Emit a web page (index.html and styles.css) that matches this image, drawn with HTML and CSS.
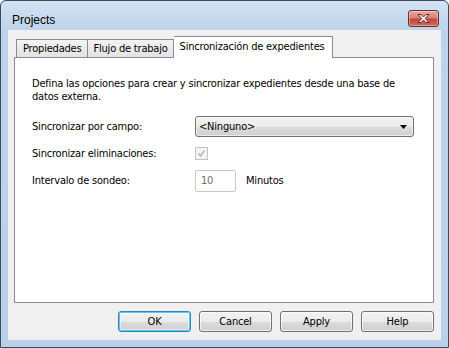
FILE: index.html
```html
<!DOCTYPE html>
<html lang="es">
<head>
<meta charset="utf-8">
<title>Projects</title>
<link rel="stylesheet" href="styles.css">
</head>
<body>
<div class="window">
  <div class="titlebar">
    <span class="title">Projects</span>
    <button class="close" aria-label="Cerrar">
      <svg width="15" height="11" viewBox="0 0 15 11">
        <path d="M2 1.5 L5 1.5 L7.5 4 L10 1.5 L13 1.5 L9.2 5.5 L13 9.5 L10 9.5 L7.5 7 L5 9.5 L2 9.5 L5.8 5.5 Z" fill="#fff" stroke="#5a2a26" stroke-width="1" stroke-linejoin="round"/>
      </svg>
    </button>
  </div>
  <div class="client">
    <div class="tabs">
      <div class="tab first">Propiedades</div>
      <div class="tab">Flujo de trabajo</div>
      <div class="tab selected">Sincronización de expedientes</div>
    </div>
    <div class="panel">
      <p class="intro">Defina las opciones para crear y sincronizar expedientes desde una base de datos externa.</p>
      <div class="form">
        <div class="label">Sincronizar por campo:</div>
        <div class="combo">
          <span>&lt;Ninguno&gt;</span>
          <svg class="arrow" width="7" height="4" viewBox="0 0 7 4"><path d="M0 0 H7 L3.5 4 Z" fill="#000"/></svg>
        </div>
        <div class="label">Sincronizar eliminaciones:</div>
        <div class="check-cell">
          <span class="check">
            <svg width="11" height="11" viewBox="0 0 11 11"><path d="M2.5 5.5 L4.5 8 L8.5 2.5" fill="none" stroke="#b5b5b5" stroke-width="1.4"/></svg>
          </span>
        </div>
        <div class="label">Intervalo de sondeo:</div>
        <div class="interval">
          <span class="input">10</span>
          <span class="unit">Minutos</span>
        </div>
      </div>
    </div>
    <div class="buttons">
      <button class="btn default">OK</button>
      <button class="btn">Cancel</button>
      <button class="btn">Apply</button>
      <button class="btn">Help</button>
    </div>
  </div>
</div>
</body>
</html>
```
FILE: styles.css
```css
html, body {
  margin: 0;
  padding: 0;
  background: #ffffff;
}

.window {
  box-sizing: border-box;
  width: 449px;
  height: 348px;
  border: 1px solid #3c4a5a;
  border-radius: 6px 6px 0 0;
  background: linear-gradient(to bottom, #d3e3f4 0px, #bcd3eb 30px, #b9d1ea 100%);
  padding: 0 7px 7px 7px;
  display: flex;
  flex-direction: column;
  font-family: "DejaVu Sans Condensed", "DejaVu Sans", sans-serif;
  font-stretch: condensed;
  font-size: 11px;
  letter-spacing: -0.2px;
  color: #000;
}

.titlebar {
  height: 29px;
  display: flex;
  align-items: flex-start;
  justify-content: space-between;
}

.title {
  font-family: "Liberation Sans", Arial, sans-serif;
  font-stretch: normal;
  letter-spacing: 0;
  font-size: 12px;
  margin-top: 12px;
  margin-left: 4px;
  color: #000;
}

.close {
  margin-top: 9px;
  margin-right: 2px;
  width: 31px;
  height: 17px;
  padding: 0;
  border: 1px solid #6b2e2a;
  border-radius: 3px;
  background: linear-gradient(to bottom, #e8a99f 0%, #d98277 45%, #c4483b 55%, #cf6a58 100%);
  display: flex;
  align-items: center;
  justify-content: center;
  box-shadow: inset 0 0 0 1px rgba(255, 255, 255, 0.35);
}

.client {
  flex: 1;
  background: #f0f0f0;
  display: flex;
  flex-direction: column;
  padding: 6px 7px 8px 6px;
}

.tabs {
  display: flex;
  align-items: flex-end;
  height: 22px;
  margin-bottom: -1px;
  padding-left: 2px;
}

.tab {
  box-sizing: border-box;
  height: 18px;
  margin-bottom: 1px;
  padding: 2px 5px 0 5px;
  border: 1px solid #898c95;
  border-bottom: none;
  border-right: none;
  background: linear-gradient(to bottom, #f3f3f3, #e3e3e3);
  white-space: nowrap;
}

.tab.first {
  padding: 2px 6px 0 6px;
}

.tab:nth-child(2) {
  border-right: 1px solid #898c95;
}

.tab.selected {
  position: relative;
  z-index: 1;
  height: 22px;
  margin-bottom: 0;
  padding: 3px 7px 0 6px;
  background: #ffffff;
  border-right: 1px solid #898c95;
  border-left: none;
}

.panel {
  flex: 1;
  background: #ffffff;
  border: 1px solid #898c95;
  padding: 19px 16px 0 17px;
}

.intro {
  margin: 0;
  line-height: 13px;
}

.form {
  margin-top: 13px;
  display: grid;
  grid-template-columns: 163px 1fr;
  grid-template-rows: 21px 20px 22px;
  row-gap: 6px;
  align-items: center;
}

.form > :nth-child(n+5) {
  margin-top: 1px;
}

.combo {
  box-sizing: border-box;
  width: 219px;
  height: 21px;
  border: 1px solid #707070;
  border-radius: 3px;
  background: linear-gradient(to bottom, #f2f2f2 0%, #ebebeb 50%, #dddddd 51%, #cfcfcf 100%);
  display: flex;
  align-items: center;
  justify-content: space-between;
  padding: 0 6px 0 3px;
  box-shadow: inset 0 0 0 1px rgba(255, 255, 255, 0.6);
}

.check-cell {
  display: flex;
  align-items: center;
}

.check {
  box-sizing: border-box;
  width: 13px;
  height: 13px;
  border: 1px solid #c2c2c2;
  background: #f4f4f4;
  display: flex;
  align-items: center;
  justify-content: center;
}

.interval {
  display: flex;
  align-items: center;
}

.input {
  box-sizing: border-box;
  width: 41px;
  height: 22px;
  border: 1px solid #c8c8c8;
  border-radius: 2px;
  background: #ffffff;
  color: #6d6d6d;
  padding: 3px 0 0 5px;
}

.unit {
  margin-left: 10px;
}

.buttons {
  display: flex;
  justify-content: flex-end;
  gap: 8px;
  margin-top: 8px;
}

.btn {
  box-sizing: border-box;
  width: 73px;
  height: 21px;
  padding: 0;
  border: 1px solid #707070;
  border-radius: 3px;
  background: linear-gradient(to bottom, #f2f2f2 0%, #ebebeb 50%, #dddddd 51%, #cfcfcf 100%);
  box-shadow: inset 0 0 0 1px rgba(255, 255, 255, 0.7);
  font-family: "DejaVu Sans Condensed", "DejaVu Sans", sans-serif;
  font-stretch: condensed;
  letter-spacing: -0.2px;
  font-size: 11px;
  color: #000;
}

.btn.default {
  border-color: #3c7fb1;
  box-shadow: inset 0 0 0 1px #48d0f8, inset 0 0 0 2px rgba(255, 255, 255, 0.5);
}
```
